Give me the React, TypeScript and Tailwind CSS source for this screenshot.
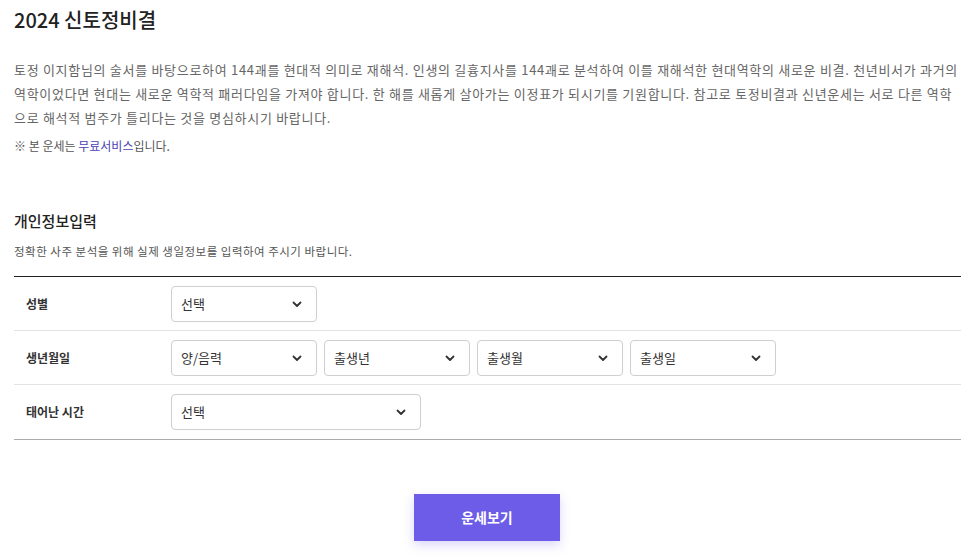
import React from "react";

const font = { fontFamily: '"Noto Sans CJK KR", "Noto Sans", sans-serif' };

function Chevron() {
  return (
    <svg width="12" height="12" viewBox="0 0 12 12" className="shrink-0">
      <path d="M2.5 4.5 L6 8 L9.5 4.5" fill="none" stroke="#333" strokeWidth="1.8" strokeLinecap="round" strokeLinejoin="round" />
    </svg>
  );
}

function Select({ label, w }: { label: string; w: string }) {
  return (
    <div className={`${w} h-[36px] flex items-center justify-between pl-[9px] pr-[13px] border border-[#cfcfcf] rounded-[4px] bg-white text-[13px] text-[#333]`}>
      <span>{label}</span>
      <Chevron />
    </div>
  );
}

function Row({ label, children, last }: { label: string; children: React.ReactNode; last?: boolean }) {
  return (
    <div className={`h-[54px] flex items-center ${last ? "" : "border-b border-[#e3e3e3]"}`}>
      <div className="w-[157px] pl-[12px] text-[12px] font-bold text-[#333]">{label}</div>
      <div className="flex gap-[7px]">{children}</div>
    </div>
  );
}

export default function App() {
  return (
    <div className="w-[970px] h-[559px] bg-white overflow-hidden" style={font}>
      <div className="w-[947px] ml-[14px]">
        <h1 className="pt-[5px] text-[20px] leading-[30px] font-medium text-[#222]">2024 신토정비결</h1>
        <p className="mt-[23px] text-[13px] leading-[24px] text-[#666] tracking-[0.7px]">
          토정 이지함님의 술서를 바탕으로하여 144괘를 현대적 의미로 재해석. 인생의 길흉지사를 144괘로 분석하여 이를 재해석한 현대역학의 새로운 비결. 천년비서가 과거의 역학이었다면 현대는 새로운 역학적 패러다임을 가져야 합니다. 한 해를 새롭게 살아가는 이정표가 되시기를 기원합니다. 참고로 토정비결과 신년운세는 서로 다른 역학으로 해석적 범주가 틀리다는 것을 명심하시기 바랍니다.
        </p>
        <p className="mt-[6px] text-[12px] leading-[20px] text-[#555]">
          ※ 본 운세는 <span className="text-[#4b3fb5]">무료서비스</span>입니다.
        </p>
        <h2 className="mt-[53px] text-[15px] leading-[24px] font-medium text-[#222]">개인정보입력</h2>
        <p className="mt-[9px] text-[11.5px] leading-[18px] text-[#555] tracking-[0.5px]">정확한 사주 분석을 위해 실제 생일정보를 입력하여 주시기 바랍니다.</p>
        <div className="mt-[16px] border-t border-[#222] border-b border-b-[#aaa]">
          <Row label="성별">
            <Select label="선택" w="w-[146px]" />
          </Row>
          <Row label="생년월일">
            <Select label="양/음력" w="w-[146px]" />
            <Select label="출생년" w="w-[146px]" />
            <Select label="출생월" w="w-[146px]" />
            <Select label="출생일" w="w-[146px]" />
          </Row>
          <Row label="태어난 시간" last>
            <Select label="선택" w="w-[250px]" />
          </Row>
        </div>
        <div className="flex mt-[54px] pl-[400px]">
          <button className="w-[146px] h-[47px] bg-[#6c5ce7] text-white text-[14px] font-bold shadow-[0_4px_10px_rgba(108,92,231,0.25)]">
            운세보기
          </button>
        </div>
      </div>
    </div>
  );
}
